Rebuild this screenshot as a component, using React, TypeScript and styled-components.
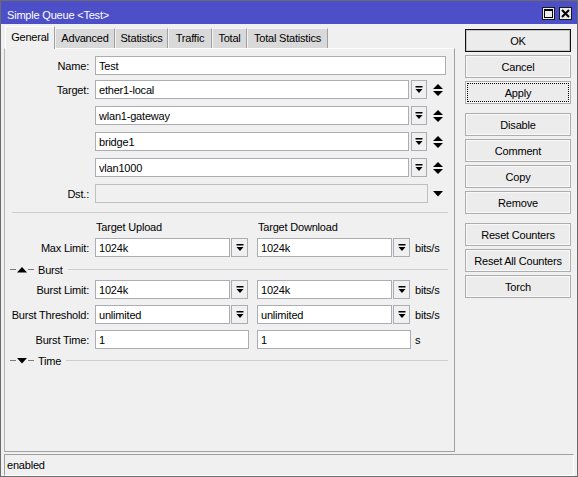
import React from 'react'
import styled, { createGlobalStyle } from 'styled-components'

const GlobalStyle = createGlobalStyle`
  html, body {
    margin: 0;
    padding: 0;
    background: #f0f0f0;
  }
  body {
    font-family: "Liberation Sans", Arial, sans-serif;
    font-size: 11px;
    letter-spacing: -0.2px;
    color: #000;
  }
  * {
    box-sizing: border-box;
  }
`

const Window = styled.div`
  width: 578px;
  height: 477px;
  border: 1px solid #6b6b6b;
  background: #f0f0f0;
  display: flex;
  flex-direction: column;
`

const TitleBar = styled.div`
  height: 23px;
  flex-shrink: 0;
  background: #4d4fc9;
  display: flex;
  align-items: flex-start;
  padding: 6px 5px 0 6px;
`

const TitleText = styled.div`
  flex: 1;
  color: #fff;
  line-height: 17px;
`

const TitleButtons = styled.div`
  display: flex;
  gap: 4px;
`

const TitleButton = styled.div`
  width: 13px;
  height: 13px;
  background: #ececec;
  border: 1px solid #1a1a1a;
  display: flex;
  align-items: center;
  justify-content: center;
`

const Body = styled.div`
  height: 430px;
  display: flex;
  padding: 2px 6px 0 3px;
  gap: 10px;
`

const LeftCol = styled.div`
  width: 451px;
  display: flex;
  flex-direction: column;
`

const TabRow = styled.div`
  height: 22px;
  display: flex;
  align-items: flex-end;
  padding-left: 1px;
`

const Tab = styled.div<{ $w: number; $active?: boolean }>`
  width: ${p => p.$w}px;
  height: ${p => (p.$active ? 23 : 20)}px;
  margin-bottom: ${p => (p.$active ? -1 : 0)}px;
  position: relative;
  z-index: ${p => (p.$active ? 1 : 0)};
  background: ${p => (p.$active ? '#f0f0f0' : '#d9d9d9')};
  border-top: 1px solid ${p => (p.$active ? '#ffffff' : '#f2f2f2')};
  border-left: 1px solid ${p => (p.$active ? '#ffffff' : '#f2f2f2')};
  border-right: 1px solid #a0a0a0;
  display: flex;
  justify-content: center;
  padding-top: ${p => (p.$active ? 4 : 3)}px;
  line-height: 13px;
`

const Panel = styled.div`
  height: 404px;
  border: 1px solid #a0a0a0;
  border-top-color: #ffffff;
  border-left-color: #b4b4b4;
  display: flex;
  flex-direction: column;
  padding-top: 7px;
`

const Row = styled.div<{ $mt?: number }>`
  display: flex;
  align-items: center;
  height: 19px;
  margin-top: ${p => p.$mt ?? 0}px;
`

const Label = styled.div`
  width: 84px;
  margin-right: 6px;
  text-align: right;
  white-space: nowrap;
`

const Field = styled.input<{ $w: number }>`
  width: ${p => p.$w}px;
  height: 19px;
  border: 1px solid #abadb3;
  background: #fff;
  font: inherit;
  letter-spacing: inherit;
  color: #000;
  padding: 0 3px;
  margin: 0;
  outline: none;
  &:disabled {
    background: #f0f0f0;
    border-color: #c0c0c0;
  }
`

const DropButton = styled.div<{ $w?: number }>`
  width: ${p => p.$w ?? 16}px;
  height: 19px;
  margin-left: ${p => (p.$w ? 1 : 2)}px;
  border: 1px solid #abadb3;
  background: #f0f0f0;
  display: flex;
  align-items: center;
  justify-content: center;
`

const Gap = styled.div<{ $w: number }>`
  width: ${p => p.$w}px;
  flex-shrink: 0;
`

const Unit = styled.div<{ $ml?: number }>`
  margin-left: ${p => p.$ml ?? 5}px;
`

const IconSlot = styled.div<{ $ml: number }>`
  margin-left: ${p => p.$ml}px;
  display: flex;
  align-items: center;
`

const Separator = styled.div<{ $mt: number }>`
  height: 1px;
  background: #cdcdcd;
  margin: ${p => p.$mt}px 6px 0 7px;
`

const HeadRow = styled.div`
  display: flex;
  height: 18px;
  align-items: center;
  margin-top: 5px;
  padding-left: 91px;
`

const ColHead = styled.div`
  width: 162px;
`

const GroupHeader = styled.div<{ $mt: number }>`
  display: flex;
  align-items: center;
  height: 13px;
  margin: ${p => p.$mt}px 6px 0 5px;
`

const ShortLine = styled.div`
  width: 6px;
  height: 1px;
  background: #7a7a7a;
`

const GroupTitle = styled.div`
  margin: 0 5px 0 4px;
`

const LongLine = styled.div`
  flex: 1;
  height: 1px;
  background: #cdcdcd;
`

const ButtonCol = styled.div`
  width: 106px;
  display: flex;
  flex-direction: column;
  padding-top: 3px;
`

const Button = styled.div<{ $default?: boolean; $focused?: boolean; $mt?: number }>`
  height: 23px;
  margin-top: ${p => p.$mt ?? 3}px;
  border: 1px solid ${p => (p.$default ? '#111' : '#adadad')};
  background: #ececec;
  box-shadow: inset 0 0 0 1px ${p => (p.$default ? '#c4c4c4' : '#f8f8f8')};
  display: flex;
  align-items: center;
  justify-content: center;
  outline: ${p => (p.$focused ? '1px dotted #000' : 'none')};
  outline-offset: -3px;
`

const StatusBar = styled.div`
  height: 22px;
  margin: 0 3px;
  border: 1px solid #a0a0a0;
  border-right-color: #fff;
  border-bottom-color: #fff;
  display: flex;
  align-items: center;
  padding-left: 2px;
`

const DropIcon = () => (
  <svg width="8" height="9" viewBox="0 0 8 9">
    <rect x="0.5" y="1" width="7" height="1.5" fill="#000" />
    <polygon points="0.5,4 7.5,4 4,8" fill="#000" />
  </svg>
)

const UpDownIcon = () => (
  <svg width="10" height="12" viewBox="0 0 10 12">
    <polygon points="0,5 5,0 10,5" fill="#000" />
    <polygon points="0,7 10,7 5,12" fill="#000" />
  </svg>
)

const DownIcon = () => (
  <svg width="10" height="6" viewBox="0 0 10 6">
    <polygon points="0,0 10,0 5,5.5" fill="#000" />
  </svg>
)

const Triangle = ({ up }: { up: boolean }) => (
  <svg width="10" height="6" viewBox="0 0 10 6" style={{ margin: '0 1px' }}>
    <polygon points={up ? '0,5.5 10,5.5 5,0' : '0,0 10,0 5,5.5'} fill="#000" />
  </svg>
)

const tabs = [
  { name: 'General', w: 50 },
  { name: 'Advanced', w: 60 },
  { name: 'Statistics', w: 53 },
  { name: 'Traffic', w: 44 },
  { name: 'Total', w: 35 },
  { name: 'Total Statistics', w: 81 },
]

const targets = ['ether1-local', 'wlan1-gateway', 'bridge1', 'vlan1000']

const PairRow = ({ label, a, b, mt }: { label: string; a: string; b: string; mt: number }) => (
  <Row $mt={mt}>
    <Label>{label}</Label>
    <Field $w={135} value={a} readOnly />
    <DropButton $w={17}>
      <DropIcon />
    </DropButton>
    <Gap $w={9} />
    <Field $w={135} value={b} readOnly />
    <DropButton $w={17}>
      <DropIcon />
    </DropButton>
    <Unit>bits/s</Unit>
  </Row>
)

export default function App() {
  return (
    <>
      <GlobalStyle />
      <Window>
        <TitleBar>
          <TitleText>Simple Queue &lt;Test&gt;</TitleText>
          <TitleButtons>
            <TitleButton>
              <svg width="9" height="9" viewBox="0 0 9 9">
                <rect x="0.5" y="0.5" width="8" height="8" fill="none" stroke="#000" />
                <rect x="0" y="0" width="9" height="2" fill="#000" />
              </svg>
            </TitleButton>
            <TitleButton>
              <svg width="9" height="9" viewBox="0 0 9 9">
                <path d="M1 1 L8 8 M8 1 L1 8" stroke="#000" strokeWidth="2" />
              </svg>
            </TitleButton>
          </TitleButtons>
        </TitleBar>
        <Body>
          <LeftCol>
            <TabRow>
              {tabs.map((t, i) => (
                <Tab key={t.name} $w={t.w} $active={i === 0}>
                  {t.name}
                </Tab>
              ))}
            </TabRow>
            <Panel>
              <Row>
                <Label>Name:</Label>
                <Field $w={351} value="Test" readOnly />
              </Row>
              {targets.map((t, i) => (
                <Row key={t} $mt={i === 0 ? 5 : 7}>
                  <Label>{i === 0 ? 'Target:' : ''}</Label>
                  <Field $w={314} value={t} readOnly />
                  <DropButton>
                    <DropIcon />
                  </DropButton>
                  <IconSlot $ml={6}>
                    <UpDownIcon />
                  </IconSlot>
                </Row>
              ))}
              <Row $mt={7}>
                <Label>Dst.:</Label>
                <Field $w={333} value="" disabled />
                <IconSlot $ml={5}>
                  <DownIcon />
                </IconSlot>
              </Row>
              <Separator $mt={9} />
              <HeadRow>
                <ColHead>Target Upload</ColHead>
                <ColHead>Target Download</ColHead>
              </HeadRow>
              <PairRow label="Max Limit:" a="1024k" b="1024k" mt={2} />
              <GroupHeader $mt={6}>
                <ShortLine />
                <Triangle up />
                <ShortLine />
                <GroupTitle>Burst</GroupTitle>
                <LongLine />
              </GroupHeader>
              <PairRow label="Burst Limit:" a="1024k" b="1024k" mt={4} />
              <PairRow label="Burst Threshold:" a="unlimited" b="unlimited" mt={6} />
              <Row $mt={6}>
                <Label>Burst Time:</Label>
                <Field $w={154} value="1" readOnly />
                <Gap $w={8} />
                <Field $w={154} value="1" readOnly />
                <Unit $ml={4}>s</Unit>
              </Row>
              <GroupHeader $mt={5}>
                <ShortLine />
                <Triangle up={false} />
                <ShortLine />
                <GroupTitle>Time</GroupTitle>
                <LongLine />
              </GroupHeader>
            </Panel>
          </LeftCol>
          <ButtonCol>
            <Button $default $mt={0}>OK</Button>
            <Button>Cancel</Button>
            <Button $focused>Apply</Button>
            <Button $mt={9}>Disable</Button>
            <Button>Comment</Button>
            <Button>Copy</Button>
            <Button>Remove</Button>
            <Button $mt={9}>Reset Counters</Button>
            <Button>Reset All Counters</Button>
            <Button>Torch</Button>
          </ButtonCol>
        </Body>
        <StatusBar>enabled</StatusBar>
      </Window>
    </>
  )
}
